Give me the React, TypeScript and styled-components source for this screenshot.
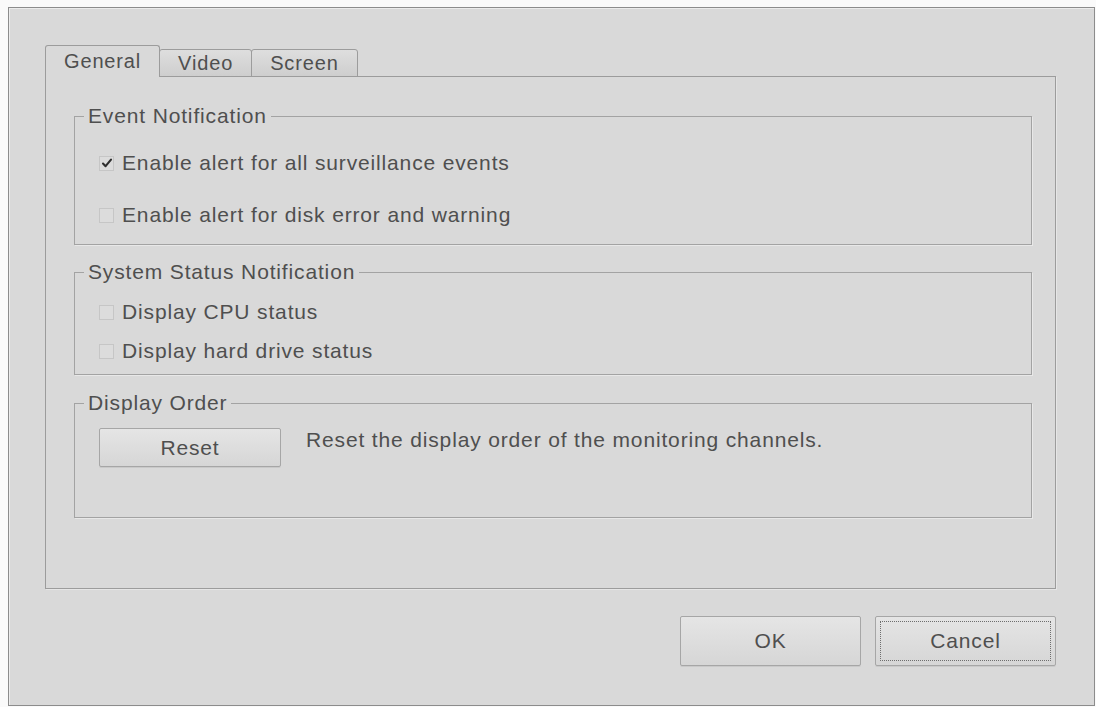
import React from 'react';
import styled, { createGlobalStyle } from 'styled-components';

const Global = createGlobalStyle`
  html, body { margin: 0; padding: 0; background: #fafafa; }
  body { font-family: "Liberation Sans", Arial, sans-serif; }
  #root { width: 1096px; height: 707px; overflow: hidden; }
`;

const Window = styled.div`
  box-sizing: border-box;
  margin: 7px 0 0 8px;
  width: 1087px;
  height: 699px;
  border: 1px solid #8c8c8c;
  box-shadow: inset 1px 1px 0 #ececec;
  background: #d9d9d9;
  padding: 37px 38px 0 36px;
  display: flex;
  flex-direction: column;
  font-family: "Liberation Sans", Arial, sans-serif;
  color: #4f4f4f;
  font-size: 21px;
  letter-spacing: 0.85px;
`;

const TabBar = styled.div`
  display: flex;
  align-items: flex-end;
  height: 32px;
  position: relative;
  z-index: 1;
  margin-bottom: -1px;
`;

const Tab = styled.div<{ $active?: boolean }>`
  box-sizing: border-box;
  height: ${(p) => (p.$active ? 32 : 28)}px;
  padding: 0 18px;
  margin-left: ${(p) => (p.$active ? 0 : -1)}px;
  border: 1px solid #9c9c9c;
  border-bottom: ${(p) => (p.$active ? 'none' : '1px solid #9c9c9c')};
  border-radius: 3px 3px 0 0;
  background: ${(p) => (p.$active ? '#d9d9d9' : 'linear-gradient(#dedede, #cecece)')};
  font-size: 20px;
  line-height: 1;
  display: flex;
  align-items: center;
  padding-bottom: ${(p) => (p.$active ? 2 : 0)}px;
`;

const Panel = styled.div`
  box-sizing: border-box;
  height: 513px;
  border: 1px solid #9c9c9c;
  box-shadow: 1px 1px 0 #e6e6e6;
  padding: 27px 23px 0 28px;
  display: flex;
  flex-direction: column;
`;

const Group = styled.fieldset<{ $gap?: number }>`
  margin: ${(p) => p.$gap ?? 0}px 0 0 0;
  padding: 0;
  min-width: 0;
  border: 1px solid #a3a3a3;
  box-shadow: 1px 1px 0 #e8e8e8;
`;

const Legend = styled.legend`
  margin-left: 9px;
  padding: 0 4px;
  line-height: 24px;
  font-size: 21px;
`;

const GroupBody = styled.div<{ $pt: number; $pb: number; $gap: number }>`
  display: flex;
  flex-direction: column;
  gap: ${(p) => p.$gap}px;
  padding: ${(p) => p.$pt}px 0 ${(p) => p.$pb}px 24px;
`;

const CheckRow = styled.label`
  display: flex;
  align-items: center;
  height: 30px;
  gap: 8px;
  line-height: 24px;
`;

const Box = styled.span`
  box-sizing: border-box;
  width: 15px;
  height: 15px;
  border: 1px solid #c6c6c6;
  background: #dcdcdc;
  display: flex;
  align-items: center;
  justify-content: center;
  flex: none;
`;

const Row = styled.div`
  display: flex;
  align-items: flex-start;
  gap: 25px;
`;

const Note = styled.span`
  line-height: 24px;
`;

const Button = styled.button<{ $w: number; $h: number; $focus?: boolean }>`
  box-sizing: border-box;
  width: ${(p) => p.$w}px;
  height: ${(p) => p.$h}px;
  border: 1px solid #a6a6a6;
  border-radius: 2px;
  background: linear-gradient(#e5e5e5, #d6d6d6);
  box-shadow: 0 1px 0 #c9c9c9;
  font-family: inherit;
  font-size: 21px;
  letter-spacing: 0.85px;
  color: #4f4f4f;
  padding: 0;
  outline: ${(p) => (p.$focus ? '1px dotted #6e6e6e' : 'none')};
  outline-offset: -6px;
`;

const Footer = styled.div`
  display: flex;
  justify-content: flex-end;
  gap: 14px;
  margin-top: 27px;
`;

const Check = () => (
  <svg width="12" height="12" viewBox="0 0 12 12">
    <path d="M2 6.5 L4.6 9.2 L10 2.6" fill="none" stroke="#2e2e2e" strokeWidth="2.1" strokeLinecap="round" strokeLinejoin="round" />
  </svg>
);

const CheckBox = ({ checked, label }: { checked?: boolean; label: string }) => (
  <CheckRow>
    <Box>{checked && <Check />}</Box>
    <span>{label}</span>
  </CheckRow>
);

export default function App() {
  return (
    <>
      <Global />
      <Window>
        <TabBar>
          <Tab $active>General</Tab>
          <Tab>Video</Tab>
          <Tab>Screen</Tab>
        </TabBar>
        <Panel>
          <Group>
            <Legend>Event Notification</Legend>
            <GroupBody $pt={20} $pb={14} $gap={22}>
              <CheckBox checked label="Enable alert for all surveillance events" />
              <CheckBox label="Enable alert for disk error and warning" />
            </GroupBody>
          </Group>
          <Group $gap={15}>
            <Legend>System Status Notification</Legend>
            <GroupBody $pt={13} $pb={8} $gap={9}>
              <CheckBox label="Display CPU status" />
              <CheckBox label="Display hard drive status" />
            </GroupBody>
          </Group>
          <Group $gap={16}>
            <Legend>Display Order</Legend>
            <GroupBody $pt={13} $pb={50} $gap={0}>
              <Row>
                <Button $w={182} $h={39}>Reset</Button>
                <Note>Reset the display order of the monitoring channels.</Note>
              </Row>
            </GroupBody>
          </Group>
        </Panel>
        <Footer>
          <Button $w={181} $h={50}>OK</Button>
          <Button $w={181} $h={50} $focus>Cancel</Button>
        </Footer>
      </Window>
    </>
  );
}
